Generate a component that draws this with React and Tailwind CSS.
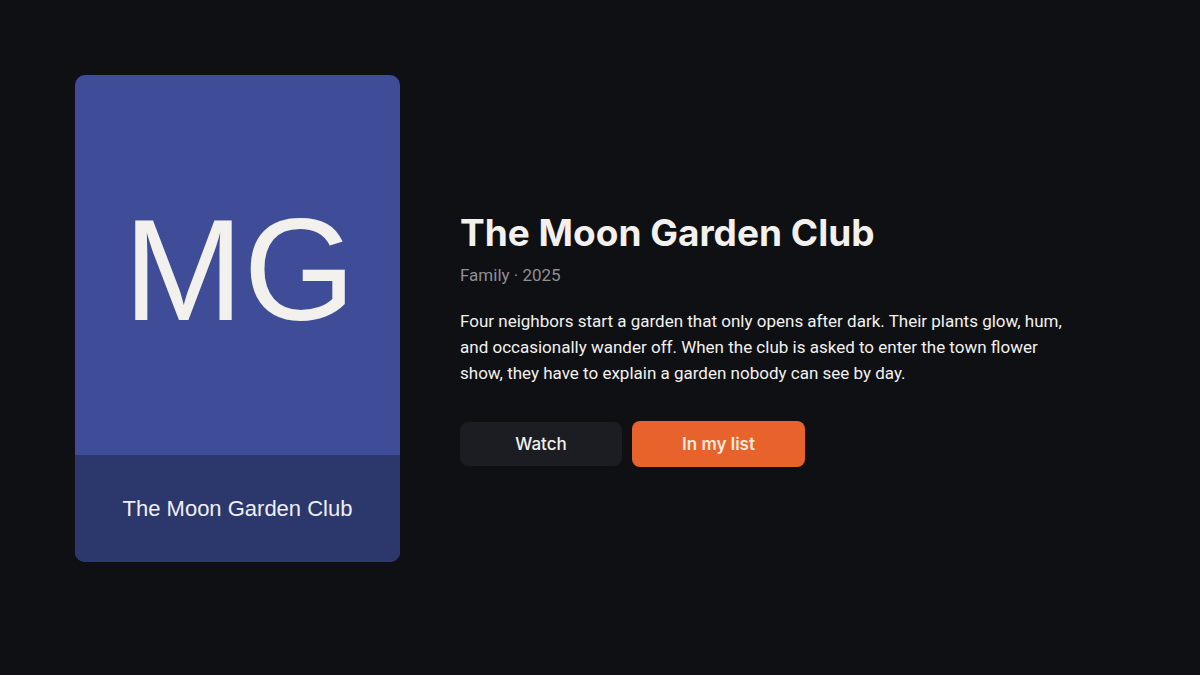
export default function App() {
  return (
    <main className="flex min-h-screen items-center gap-[60px] bg-[#0e1013] px-[75px] pb-[38px] font-['Inter',sans-serif] text-[#f3f1ee]">
      <div className="flex aspect-[325/487] w-[325px] shrink-0 flex-col overflow-hidden rounded-[10px] bg-[#3f4d99] font-['Liberation_Sans',sans-serif]">
        <div className="flex flex-1 items-center justify-center pt-[12px] pl-[4px] text-[144px] leading-none">MG</div>
        <div className="flex h-[107px] items-center justify-center bg-[#2c376b] text-[22px] text-[#eef0f8]">The Moon Garden Club</div>
      </div>
      <section className="max-w-[610px] pt-[38px]">
        <h1 className="text-[37px] leading-[48px] font-bold">The Moon Garden Club</h1>
        <p className="mt-[6px] font-['Roboto',sans-serif] text-[17px] leading-[24px] text-[#8f8f96]">Family · 2025</p>
        <p className="mt-[21px] font-['Roboto',sans-serif] text-[17px] leading-[26px]">
          Four neighbors start a garden that only opens after dark. Their plants glow, hum, and occasionally wander off. When the club is asked to enter the town flower show, they have to explain a garden nobody can see by day.
        </p>
        <div className="mt-[35px] flex items-center gap-[10px]">
          <button type="button" className="h-[44px] w-[162px] rounded-[8px] bg-[#1c1d22] pt-[2px] text-[17px] font-medium">Watch</button>
          <button type="button" aria-pressed="true" className="h-[46px] w-[173px] rounded-[8px] bg-[#e8622b] pt-[2px] text-[17px] font-semibold text-[#fbe9dc]">In my list</button>
        </div>
      </section>
    </main>
  );
}
